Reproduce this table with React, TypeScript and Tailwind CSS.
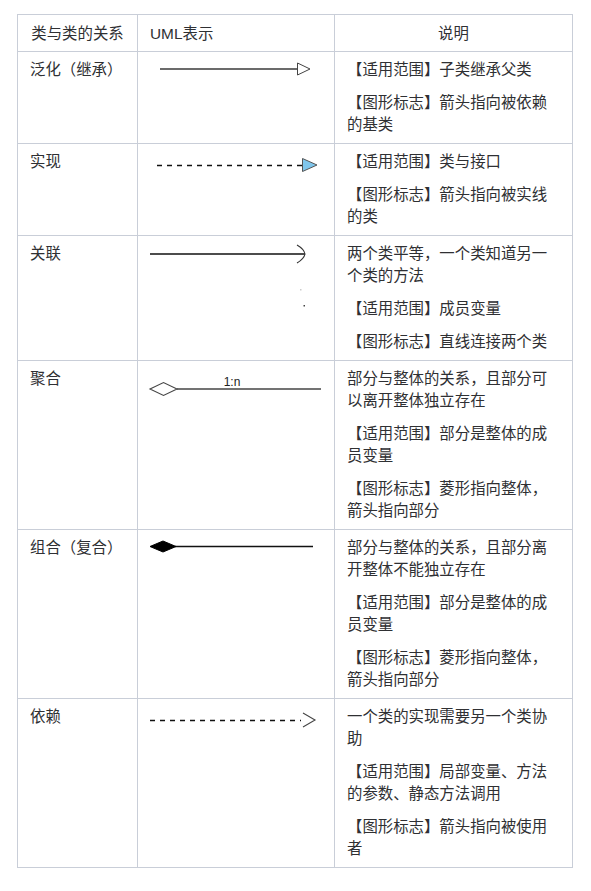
const font = {
  fontFamily: '"Liberation Sans", "Noto Sans CJK SC", sans-serif',
};

function ArrowGeneralization() {
  return (
    <svg width="196" height="40" className="block">
      <line x1="22" y1="17" x2="159" y2="17" stroke="#6b6b6b" strokeWidth="1.8" />
      <polygon points="159.5,11 172,17 159.5,23" fill="#fff" stroke="#444" strokeWidth="1" />
    </svg>
  );
}

function ArrowRealization() {
  return (
    <svg width="196" height="40" className="block">
      <line x1="19" y1="21.5" x2="164" y2="21.5" stroke="#111" strokeWidth="1.6" strokeDasharray="5 5" />
      <polygon points="164.5,14.5 179,21 164.5,27.5" fill="#7fc6ec" stroke="#555" strokeWidth="1" />
    </svg>
  );
}

function ArrowAssociation() {
  return (
    <svg width="196" height="80" className="block">
      <line x1="12" y1="18" x2="167" y2="18" stroke="#111" strokeWidth="1.3" />
      <path d="M159 9 Q166 13 167 18 Q166 23 159 27" fill="none" stroke="#333" strokeWidth="1.1" />
      <rect x="162" y="53" width="1.5" height="1.5" fill="#ccc" />
      <rect x="165.5" y="69" width="1.5" height="1.5" fill="#444" />
    </svg>
  );
}

function ArrowAggregation() {
  return (
    <svg width="196" height="40" className="block">
      <line x1="39" y1="28" x2="183" y2="28" stroke="#444" strokeWidth="1.3" />
      <polygon points="12,28 25.5,21.5 39,28 25.5,34.5" fill="#fff" stroke="#444" strokeWidth="1.1" />
      <text x="94" y="25" textAnchor="middle" fontSize="12" fill="#222" style={font}>
        1:n
      </text>
    </svg>
  );
}

function ArrowComposition() {
  return (
    <svg width="196" height="30" className="block">
      <line x1="37" y1="16.5" x2="175" y2="16.5" stroke="#111" strokeWidth="1.5" />
      <polygon points="12,16.5 25,11 38,16.5 25,22" fill="#000" stroke="#000" strokeWidth="1" />
    </svg>
  );
}

function ArrowDependency() {
  return (
    <svg width="196" height="40" className="block">
      <line x1="12" y1="21.5" x2="163" y2="21.5" stroke="#111" strokeWidth="1.6" strokeDasharray="5 5" />
      <path d="M165 14 L177 21 L165 28" fill="none" stroke="#444" strokeWidth="1.1" />
    </svg>
  );
}

const rows = [
  {
    name: "泛化（继承）",
    uml: <ArrowGeneralization />,
    desc: ["【适用范围】子类继承父类", "【图形标志】箭头指向被依赖的基类"],
  },
  {
    name: "实现",
    uml: <ArrowRealization />,
    desc: ["【适用范围】类与接口", "【图形标志】箭头指向被实线的类"],
  },
  {
    name: "关联",
    uml: <ArrowAssociation />,
    desc: ["两个类平等，一个类知道另一个类的方法", "【适用范围】成员变量", "【图形标志】直线连接两个类"],
  },
  {
    name: "聚合",
    uml: <ArrowAggregation />,
    desc: [
      "部分与整体的关系，且部分可以离开整体独立存在",
      "【适用范围】部分是整体的成员变量",
      "【图形标志】菱形指向整体，箭头指向部分",
    ],
  },
  {
    name: "组合（复合）",
    uml: <ArrowComposition />,
    desc: [
      "部分与整体的关系，且部分离开整体不能独立存在",
      "【适用范围】部分是整体的成员变量",
      "【图形标志】菱形指向整体，箭头指向部分",
    ],
  },
  {
    name: "依赖",
    uml: <ArrowDependency />,
    desc: [
      "一个类的实现需要另一个类协助",
      "【适用范围】局部变量、方法的参数、静态方法调用",
      "【图形标志】箭头指向被使用者",
    ],
  },
];

export default function App() {
  return (
    <div className="min-h-screen bg-white pt-[14px] pl-[17px]" style={font}>
      <table className="w-[555px] table-fixed border-collapse text-[15.4px] leading-[22px] text-[#2f3033]">
        <colgroup>
          <col className="w-[120px]" />
          <col className="w-[197px]" />
          <col className="w-[238px]" />
        </colgroup>
        <thead>
          <tr>
            <th className="border border-[#c9ced8] px-3 pt-[8px] pb-[6px] text-center font-normal">类与类的关系</th>
            <th className="border border-[#c9ced8] px-3 pt-[8px] pb-[6px] text-left font-normal">UML表示</th>
            <th className="border border-[#c9ced8] px-3 pt-[8px] pb-[6px] text-center font-normal">说明</th>
          </tr>
        </thead>
        <tbody>
          {rows.map((r) => (
            <tr key={r.name}>
              <td className="border border-[#c9ced8] px-3 pt-[7px] pb-[7px] align-top">{r.name}</td>
              <td className="border border-[#c9ced8] p-0 align-top">{r.uml}</td>
              <td className="border border-[#c9ced8] px-3 pt-[7px] pb-[7px] align-top">
                <div className="flex flex-col gap-[11px]">
                  {r.desc.map((d) => (
                    <p key={d}>{d}</p>
                  ))}
                </div>
              </td>
            </tr>
          ))}
        </tbody>
      </table>
    </div>
  );
}
